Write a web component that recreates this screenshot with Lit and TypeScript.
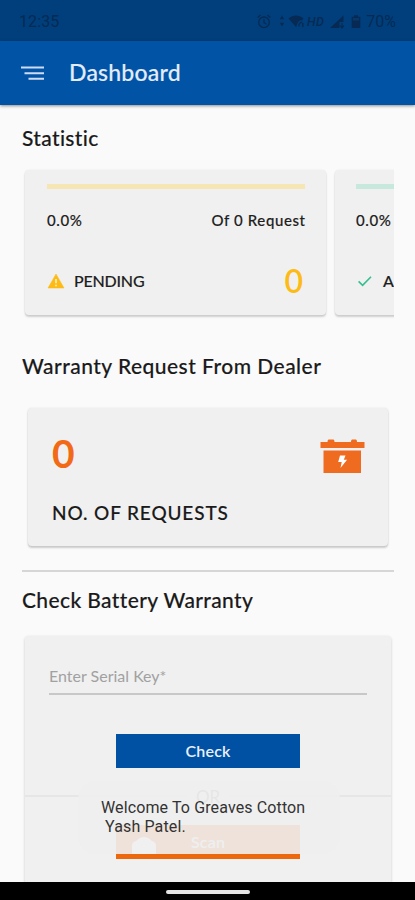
import { LitElement, html, css } from "lit";
import { customElement, property } from "lit/decorators.js";

const warningIcon = html`<svg class="icon" width="18" height="16" viewBox="0 0 18 16">
  <path d="M9 1 L17 15 H1 Z" fill="#fdbb16" stroke="#fdbb16" stroke-width=".5" stroke-linejoin="round" />
  <path d="M9 6v4.2M9 11.7v1.5" stroke="#fff3cf" stroke-width="1.5" />
</svg>`;

const checkIcon = html`<svg class="icon" width="18" height="16" viewBox="0 0 18 16">
  <path d="M2.6 8.4 L6.6 12.4 L15 3.7" fill="none" stroke="#35bf91" stroke-width="1.6" />
</svg>`;

@customElement("status-bar")
export class StatusBar extends LitElement {
  static styles = css`
    :host {
      display: flex;
      align-items: center;
      justify-content: space-between;
      height: 41px;
      padding: 2px 19px 0 19px;
      box-sizing: border-box;
      background: #003f7b;
      color: #062a54;
      font: 400 16px "Roboto", sans-serif;
    }
    .clock { letter-spacing: 0.1px; }
    .tray { display: flex; align-items: center; }
    .level { letter-spacing: 0; margin-left: 4px; }
  `;
  render() {
    return html`
      <span class="clock">12:35</span>
      <div class="tray">
        <svg width="106" height="18" viewBox="0 0 106 18" fill="#062a54">
          <g fill="none" stroke="#062a54" stroke-width="1.3">
            <circle cx="8" cy="9.3" r="5.3" />
            <path d="M8 6v3.600l2.500 1.600M1.600 4.400l3-2.500M14.400 4.400l-3-2.500" />
          </g>
          <path d="M26 2.600l2.200 3.600h-4.400zM26 13.400l2.200-3.600h-4.400z" />
          <path d="M32.500 5.400C37 1.400 43 1.400 47.500 5.400l-1.500 2.100q-4-1.500-5.800 6.700z" />
          <path d="M43 13.500q-.500-4 3.200-4.200M46.800 10v4" fill="none" stroke="#062a54" stroke-width="1.400" />
          <text x="51" y="13" font-family="Roboto, sans-serif" font-size="12.500" font-weight="500" font-style="italic" textLength="17">HD</text>
          <path d="M74 15L87.500 2.500V9H83.500v6z" />
          <path d="M86 10v4.500M84 12.500l2 2.500 2-2.500" fill="none" stroke="#062a54" stroke-width="1.200" />
          <path d="M98 2.200h4v1.600h2.300v11.200h-8.600V3.800H98z" />
          <path d="M97 5h6v2.500h-6z" fill="#06386c" />
        </svg>
        <span class="level">70%</span>
      </div>
    `;
  }
}

@customElement("stat-card")
export class StatCard extends LitElement {
  @property() kind: "pending" | "approved" = "pending";
  @property() label = "";
  static styles = css`
    :host {
      display: block;
      flex: none;
      width: 301px;
      height: 145px;
      box-sizing: border-box;
      padding: 14px 21px 0 22px;
      border-radius: 4px;
      background: #f0f0f0;
      box-shadow: 0 2px 2px rgba(0, 0, 0, 0.17), 0 0 2px rgba(0, 0, 0, 0.08);
      color: #1e1e1e;
      font: 500 15px/20px "Lato", sans-serif;
    }
    :host([kind="approved"]) { padding-left: 21px; }
    .bar { height: 5px; background: #f5e6b4; }
    .approved { background: #c7e8dc; }
    .row { display: flex; align-items: center; justify-content: space-between; }
    .totals { margin-top: 21px; letter-spacing: 0.6px; -webkit-text-stroke: 0.15px #1e1e1e; }
    .totals span:last-child { margin-right: -0.6px; }
    .result { margin-top: 31px; height: 40px; }
    .name { display: flex; align-items: center; gap: 9px; font-size: 16px; letter-spacing: -0.2px; -webkit-text-stroke: 0.15px #1e1e1e; }
    .value { font: 600 32px/40px "Lato", sans-serif; color: #fdbb16; padding-right: 2px; }
    .icon { display: block; }
  `;
  render() {
    const approved = this.kind === "approved";
    return html`
      <div class="bar ${approved ? "approved" : ""}"></div>
      <div class="row totals"><span>0.0%</span><span>Of 0 Request</span></div>
      <div class="row result">
        <span class="name">${approved ? checkIcon : warningIcon}${this.label}</span>
        <span class="value">0</span>
      </div>
    `;
  }
}

@customElement("app-root")
export class AppRoot extends LitElement {
  static styles = css`
    :host {
      display: flex;
      flex-direction: column;
      position: relative;
      height: 900px;
      overflow: hidden;
      background: #fafafa;
      color: #1a1a1a;
      font-family: "Lato", sans-serif;
    }
    status-bar { flex: none; }
    .appbar {
      flex: none;
      display: flex;
      align-items: center;
      gap: 24px;
      height: 64px;
      padding-left: 21px;
      background: #0053a5;
      box-shadow: 0 1px 3px rgba(0, 0, 0, 0.45);
      color: #e4ebfb;
    }
    .title { margin-top: -2px; font-size: 23px; font-weight: 500; letter-spacing: 0.2px; -webkit-text-stroke: 0.15px #e4ebfb; }
    .content { flex: 1; min-height: 0; overflow: hidden; padding: 0 21px 0 22px; }
    h2 { margin: 0; font-size: 21px; line-height: 26px; font-weight: 500; white-space: nowrap; -webkit-text-stroke: 0.15px #1a1a1a; }
    .h-stat { margin-top: 20px; letter-spacing: 0.35px; }
    .h-dealer { margin-top: 32px; letter-spacing: 0.47px; }
    .h-check { margin-top: 15px; letter-spacing: 0.37px; }
    .carousel { display: flex; gap: 9px; overflow: hidden; margin-top: 17px; padding: 2px 0 6px 3px; }
    .dealer {
      display: grid;
      grid-template-columns: 1fr auto;
      grid-template-rows: 42px 26px;
      row-gap: 26px;
      width: 360px;
      height: 138px;
      box-sizing: border-box;
      margin: 29px 0 0 6px;
      padding: 24px 23px 0 24px;
      border-radius: 4px;
      background: #f0f0f0;
      box-shadow: 0 2px 2px rgba(0, 0, 0, 0.18), 0 0 2px rgba(0, 0, 0, 0.1);
    }
    .count { color: #f26a16; font-size: 39px; line-height: 42px; font-weight: 700; }
    .battery { margin-top: 7px; }
    .caption { font-size: 19px; line-height: 26px; font-weight: 500; letter-spacing: 0.86px; white-space: nowrap; -webkit-text-stroke: 0.15px #1a1a1a; }
    .rule { height: 2px; margin-top: 24px; background: #d6d6d6; }
    .check {
      display: flex;
      flex-direction: column;
      align-items: center;
      width: 366px;
      height: 270px;
      margin: 23px 0 0 3px;
      border-radius: 4px;
      background: #f0f0f0;
      box-shadow: 0 1px 3px rgba(0, 0, 0, 0.2);
    }
    .field {
      width: 318px;
      height: 59px;
      box-sizing: border-box;
      padding-top: 29px;
      border-bottom: 2px solid #c8c8c8;
      color: #a1a1a1;
      font-size: 16px;
      line-height: 22px;
      letter-spacing: 0;
    }
    .button {
      width: 184px;
      height: 34px;
      line-height: 34px;
      text-align: center;
      font-size: 16px;
      font-weight: 600;
      letter-spacing: 0.2px;
      color: #eaf0fb;
      background: #0050a4;
    }
    .primary { margin-top: 39px; }
    .or { display: flex; align-items: center; align-self: stretch; gap: 10px; height: 20px; margin: 18px 0 19px; color: #888; font-size: 17px; }
    .or::before, .or::after { content: ""; flex: 1; height: 2px; background: #e6e6e6; }
    .scan { background: #ed670c; display: flex; justify-content: center; gap: 34px; }
    .scan svg { margin: 9px 0 0 -60px; }
    .toast {
      position: absolute;
      left: 78px;
      top: 781px;
      width: 262px;
      height: 73px;
      box-sizing: border-box;
      padding: 17px 0 0 23px;
      border-radius: 18px;
      background: rgba(239, 239, 239, 0.91);
      color: #333;
      font: 400 16px/19px "Roboto", sans-serif;
      letter-spacing: 0.12px;
      white-space: pre;
    }
    .nav { flex: none; display: flex; justify-content: center; height: 18px; background: #000; }
    .handle { width: 84px; height: 4px; margin-top: 8px; border-radius: 2px; background: #e4e4e4; }
  `;

  render() {
    return html`
      <status-bar></status-bar>
      <header class="appbar">
        <svg width="24" height="18" viewBox="0 0 24 18" fill="#cfdcf7">
          <path d="M0 2.500h23v2H0zM3.500 8.200H23v2H3.500zM7.500 13.700H23v2H7.500z" />
        </svg>
        <span class="title">Dashboard</span>
      </header>
      <main class="content">
        <h2 class="h-stat">Statistic</h2>
        <div class="carousel">
          <stat-card label="PENDING"></stat-card>
          <stat-card kind="approved" label="APPROVED"></stat-card>
        </div>
        <h2 class="h-dealer">Warranty Request From Dealer</h2>
        <section class="dealer">
          <span class="count">0</span>
          <svg class="battery" width="45" height="36" viewBox="0 0 45 36" fill="#ef6b1f">
            <path d="M8.500 0.500h5q1 0 1 2.500h16.500q0-2.500 1-2.500h4q1 0 1 2.500H44.500V9H.5V3h7q0-2.500 1-2.500zM3.500 11.500H41V34H3.500z" />
            <path d="M20 16.500h5.500l-1.700 4.300h3.300L20.500 29l1.200-6h-3.500z" fill="#fff" />
          </svg>
          <span class="caption">NO. OF REQUESTS</span>
        </section>
        <div class="rule"></div>
        <h2 class="h-check">Check Battery Warranty</h2>
        <section class="check">
          <div class="field">Enter Serial Key*</div>
          <div class="button primary">Check</div>
          <div class="or">OR</div>
          <div class="button scan">
            <svg width="26" height="20" viewBox="0 0 26 20" fill="#fff"><path d="M1 20V12q0-4 4-5l3-2.500q5-3 10 0L21 7q4 1 4 5v8z" /></svg>
            <span>Scan</span>
          </div>
        </section>
      </main>
      <div class="toast">Welcome To Greaves Cotton
 Yash Patel.</div>
      <footer class="nav"><div class="handle"></div></footer>
    `;
  }
}
